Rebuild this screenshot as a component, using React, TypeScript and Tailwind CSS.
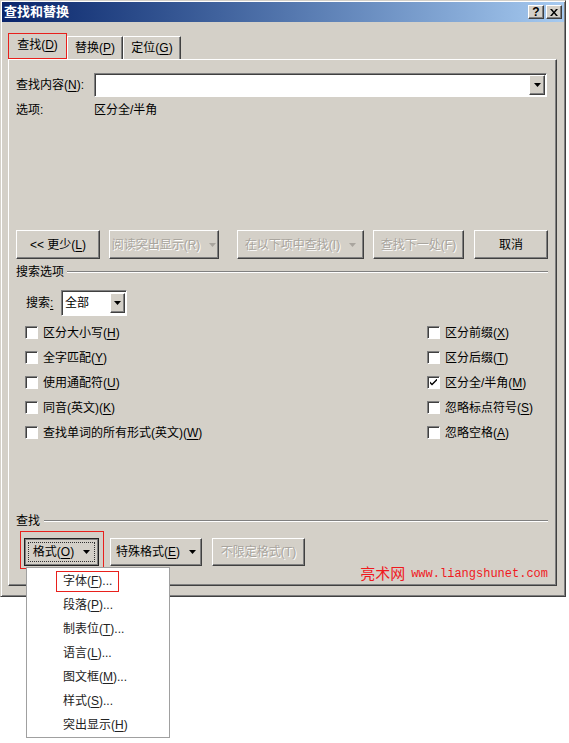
import React from "react";
import clsx from "clsx";

const K = ({ c }: { c: string }) => (
  <span className="underline underline-offset-[2px]">{c}</span>
);

function Tri({ className = "" }: { className?: string }) {
  return (
    <svg width="7" height="4" viewBox="0 0 7 4" className={className}>
      <path d="M0 0h7L3.5 4z" fill="currentColor" />
    </svg>
  );
}

const raised =
  "border border-t-white border-l-white border-r-[#404040] border-b-[#404040] shadow-[inset_-1px_-1px_0_#808080]";
const sunken =
  "border border-t-[#808080] border-l-[#808080] border-b-white border-r-white shadow-[inset_1px_1px_0_#404040]";
const dim = "text-[#a9a59e] [text-shadow:1px_1px_0_#fff]";

function Btn({
  className,
  disabled,
  arrow,
  pressed,
  children,
}: {
  className: string;
  disabled?: boolean;
  arrow?: boolean;
  pressed?: boolean;
  children: React.ReactNode;
}) {
  return (
    <div
      className={clsx(
        "flex h-full shrink-0 items-center justify-center",
        pressed
          ? "border border-[#202020] shadow-[inset_1px_1px_0_#808080,inset_-1px_-1px_0_#808080] p-[3px]"
          : raised,
        disabled && dim,
        className
      )}
    >
      <div
        className={clsx(
          "flex h-full w-full items-center justify-center gap-[9px]",
          pressed && "border border-dotted border-[#303030]"
        )}
      >
        <span>{children}</span>
        {arrow && <Tri />}
      </div>
    </div>
  );
}

function Check({
  checked,
  children,
}: {
  checked?: boolean;
  children: React.ReactNode;
}) {
  return (
    <div className="flex h-[25px] items-center">
      <span
        className={clsx(
          "flex h-[13px] w-[13px] items-center justify-center bg-white",
          sunken
        )}
      >
        {checked && (
          <svg width="7" height="7" viewBox="0 0 7 7">
            <path d="M0 2.5 2 4.5 7 -0.5V1.5L2 6.5 0 4.5z" fill="#000" />
          </svg>
        )}
      </span>
      <span className="ml-[5px]">{children}</span>
    </div>
  );
}

function Group({ label, line }: { label: string; line: string }) {
  return (
    <div className="flex h-[16px] items-center">
      <span>{label}</span>
      <div
        className={clsx(
          "h-[2px] flex-1 border-t border-t-[#808080] border-b border-b-white",
          line
        )}
      />
    </div>
  );
}

const menu = [
  ["段落", "P", "..."],
  ["制表位", "T", "..."],
  ["语言", "L", "..."],
  ["图文框", "M", "..."],
  ["样式", "S", "..."],
  ["突出显示", "H", ""],
];

export default function App() {
  return (
    <div className="relative h-[743px] w-[569px] overflow-hidden bg-white font-['Liberation_Sans','Noto_Sans_CJK_SC',sans-serif] text-[12px] leading-[16px] text-black">
      {/* dialog */}
      <div className="h-[597px] w-[566px] border border-t-[#d4d0c8] border-l-[#d4d0c8] border-r-[#404040] border-b-[#404040] bg-[#d4d0c8] p-[1px] shadow-[inset_1px_1px_0_#fff,inset_-1px_-1px_0_#808080]">
        <div className="flex h-[20px] items-center bg-gradient-to-r from-[#0a246a] to-[#a6caf0] pl-[2px] pr-[2px]">
          <span className="text-[13px] font-bold text-white">查找和替换</span>
          <div className="ml-auto flex gap-[2px]">
            <div className={clsx("flex h-[14px] w-[16px] items-center justify-center bg-[#d4d0c8] text-[12px] font-bold leading-none", raised)}>
              ?
            </div>
            <div className={clsx("flex h-[14px] w-[16px] items-center justify-center bg-[#d4d0c8]", raised)}>
              <svg width="8" height="7" viewBox="0 0 8 7">
                <path d="M0 0h2l2 2.5L6 0h2L5 3.5 8 7H6L4 4.5 2 7H0l3-3.5z" fill="#000" />
              </svg>
            </div>
          </div>
        </div>

        <div className="pl-[6px]">
          {/* tabs */}
          <div className="mt-[11px] flex h-[26px] items-end">
            <div className="relative z-10 flex h-[26px] w-[59px] items-center justify-center border border-[#e8201c] bg-[#d4d0c8] pb-[2px]">
              查找(<K c="D" />)
            </div>
            <div className="flex h-[23px] w-[56px] items-center justify-center border-l border-t border-r border-l-white border-t-white border-r-[#404040] shadow-[inset_-1px_0_0_#808080]">
              替换(<K c="P" />)
            </div>
            <div className="flex h-[23px] w-[58px] items-center justify-center border-l border-t border-r border-l-white border-t-white border-r-[#404040] shadow-[inset_-1px_0_0_#808080]">
              定位(<K c="G" />)
            </div>
          </div>

          {/* panel */}
          <div className={clsx("h-[527px] w-[549px] pl-[7px] pr-[8px]", raised)}>
            <div className="mt-[13px] flex h-[24px] items-center">
              <span className="w-[78px]">
                查找内容(<K c="N" />):
              </span>
              <div className={clsx("flex h-[24px] w-[453px] items-center justify-end bg-white pr-[1px]", sunken)}>
                <div className={clsx("flex h-[20px] w-[16px] items-center justify-center bg-[#d4d0c8]", raised)}>
                  <Tri />
                </div>
              </div>
            </div>
            <div className="mt-[5px] flex h-[16px] items-center">
              <span className="w-[78px]">选项:</span>
              <span>区分全/半角</span>
            </div>

            <div className="mt-[112px] flex h-[29px]">
              <Btn className="w-[84px]">
                {"<<"} 更少(<K c="L" />)
              </Btn>
              <Btn className="ml-[9px] w-[110px]" disabled arrow>
                阅读突出显示(R)
              </Btn>
              <Btn className="ml-[18px] w-[127px]" disabled arrow>
                在以下项中查找(I)
              </Btn>
              <Btn className="ml-[9px] w-[91px]" disabled>
                查找下一处(F)
              </Btn>
              <Btn className="ml-[10px] w-[74px]">取消</Btn>
            </div>

            <div className="mt-[5px]">
              <Group label="搜索选项" line="ml-[3px]" />
            </div>

            <div className="mt-[10px] flex h-[26px] items-center pl-[10px]">
              <span className="w-[35px]">
                搜索<span className="underline underline-offset-[2px]">:</span>
              </span>
              <div className={clsx("flex h-[26px] w-[66px] items-center bg-white pl-[3px] pr-[1px]", sunken)}>
                <span>全部</span>
                <div className={clsx("ml-auto flex h-[20px] w-[15px] items-center justify-center bg-[#d4d0c8]", raised)}>
                  <Tri />
                </div>
              </div>
            </div>

            <div className="mt-[4px] flex">
              <div className="w-[411px] pl-[9px]">
                <Check>
                  区分大小写(<K c="H" />)
                </Check>
                <Check>
                  全字匹配(<K c="Y" />)
                </Check>
                <Check>
                  使用通配符(<K c="U" />)
                </Check>
                <Check>
                  同音(英文)(<K c="K" />)
                </Check>
                <Check>
                  查找单词的所有形式(英文)(<K c="W" />)
                </Check>
              </div>
              <div>
                <Check>
                  区分前缀(<K c="X" />)
                </Check>
                <Check>
                  区分后缀(<K c="T" />)
                </Check>
                <Check checked>
                  区分全/半角(<K c="M" />)
                </Check>
                <Check>
                  忽略标点符号(<K c="S" />)
                </Check>
                <Check>
                  忽略空格(<K c="A" />)
                </Check>
              </div>
            </div>

            <div className="mt-[68px]">
              <Group label="查找" line="ml-[4px]" />
            </div>

            <div className="relative mt-[9px] flex h-[28px] pl-[8px]">
              <div className="relative">
                <Btn className="w-[75px]" pressed arrow>
                  格式(<K c="O" />)
                </Btn>
                <div className="absolute -left-[4px] -top-[7px] h-[38px] w-[84px] border border-[#e8201c]" />
              </div>
              <Btn className="ml-[11px] w-[92px]" arrow>
                特殊格式(<K c="E" />)
              </Btn>
              <Btn className="ml-[10px] w-[93px]" disabled>
                不限定格式(T)
              </Btn>
            </div>

            <div className="flex h-[16px] items-center justify-end text-[#f0191e]">
              <span className="text-[15px]">亮术网</span>
              <span className="ml-[6px] font-['Liberation_Mono',monospace] text-[12px]">
                www.liangshunet.com
              </span>
            </div>
          </div>
        </div>
      </div>

      {/* dropdown menu */}
      <div className="absolute left-[26px] top-[567px] h-[171px] w-[144px] border border-[#a0a0a0] bg-white pt-[1px] text-[#222]">
        <div className="flex h-[24px] items-center pl-[29px]">
          <span className="flex h-[21px] items-center border border-[#e8201c] px-[6px]">
            字体(<K c="F" />)...
          </span>
        </div>
        {menu.map(([t, k, d]) => (
          <div key={t} className="flex h-[24px] items-center pl-[36px]">
            {t}(<K c={k} />){d}
          </div>
        ))}
      </div>
    </div>
  );
}
